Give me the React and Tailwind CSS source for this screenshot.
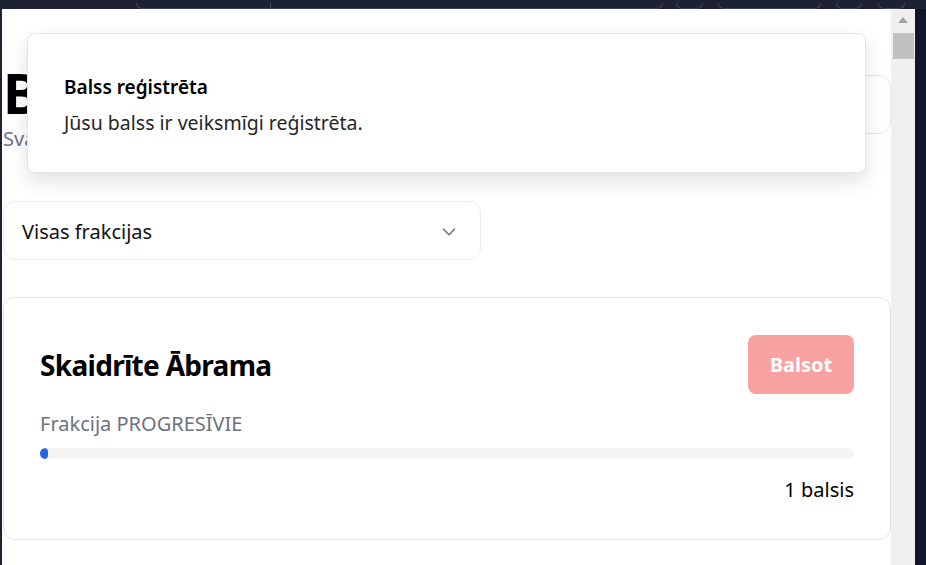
import React from "react";

function ChevronDown() {
  return (
    <svg width="22" height="22" viewBox="0 0 24 24" fill="none" stroke="#737373" strokeWidth="1.8" strokeLinecap="round" strokeLinejoin="round">
      <path d="M6 9l6 6 6-6" />
    </svg>
  );
}

export default function App() {
  const font = { fontFamily: '"Noto Sans", "Open Sans", Arial, sans-serif' };
  return (
    <div className="w-[926px] h-[565px] overflow-hidden bg-[#0f1729] flex flex-col" style={font}>
      {/* top browser strip */}
      <div className="h-[9px] bg-[#1c2232] flex items-end shrink-0">
        <div className="ml-[136px] w-[527px] h-[6px] border-b border-x border-[#3d4558] rounded-b-md flex">
          <div className="w-[134px] h-full border-r border-[#3d4558]" />
        </div>
        <div className="ml-[13px] w-[27px] h-[6px] border-b border-x border-[#3d4558] rounded-b-md" />
        <div className="ml-[15px] w-[103px] h-[6px] border-b border-x border-[#3d4558] rounded-b-md" />
        <div className="ml-[15px] w-[26px] h-[6px] border-b border-x border-[#3d4558] rounded-b-md" />
        <div className="ml-[16px] w-[27px] h-[6px] border-b border-x border-[#3d4558] rounded-b-md" />
      </div>
      <div className="flex flex-1 min-h-0">
        <div className="w-[2px] bg-[#1c2232] shrink-0" />
        {/* page */}
        <div className="relative w-[889px] bg-white overflow-hidden shrink-0">
          <div className="pl-[1px]">
            {/* header */}
            <div className="flex justify-between items-start pt-[52px]">
              <div>
                <h1 className="text-[55px] leading-[64px] font-bold text-black tracking-tight">Balsošana</h1>
                <p className="text-[20px] leading-[28px] text-[#6b7280]">Svarīgākie deputātu kandidāti</p>
              </div>
              <div className="mt-[14px] h-[59px] w-[200px] border border-[#e5e7eb] rounded-xl" />
            </div>
            {/* select */}
            <div className="mt-[48px] w-[478px] h-[59px] border border-[#ececec] rounded-xl flex items-center justify-between pl-[18px] pr-[20px] pt-[2px]">
              <span className="text-[20px] text-[#111]">Visas frakcijas</span>
              <ChevronDown />
            </div>
            {/* card */}
            <div className="mt-[37px] border border-[#e3e3e3] rounded-xl px-[36px] pt-[37px] pb-[35px]">
              <div className="flex items-center justify-between">
                <h2 className="text-[28px] font-bold text-black tracking-tight">Skaidrīte Ābrama</h2>
                <button className="h-[59px] w-[106px] rounded-lg bg-[#f7a1a1] text-white font-bold text-[20px]">Balsot</button>
              </div>
              <p className="mt-[16px] text-[20px] leading-[28px] text-[#6b7280]">Frakcija PROGRESĪVIE</p>
              <div className="mt-[10px] h-[11px] rounded-full bg-[#f4f4f2] overflow-hidden">
                <div className="h-full w-[8px] rounded-full bg-[#2563eb]" />
              </div>
              <p className="mt-[17px] text-[20px] leading-[28px] text-black text-right">1 balsis</p>
            </div>
          </div>
          {/* toast */}
          <div className="absolute left-[25px] top-[24px] w-[839px] h-[140px] bg-white border border-[#e5e5e5] rounded-lg shadow-[0_8px_20px_rgba(0,0,0,0.12)] pl-[36px] pt-[40px]">
            <div className="text-[19px] leading-[26px] font-semibold text-black">Balss reģistrēta</div>
            <div className="mt-[10px] text-[19.5px] leading-[26px] text-[#262626]">Jūsu balss ir veiksmīgi reģistrēta.</div>
          </div>
        </div>
        {/* scrollbar */}
        <div className="w-[24px] bg-[#f0f0f0] shrink-0 flex flex-col items-center">
          <div className="mt-[8px] w-0 h-0 border-l-[5px] border-r-[5px] border-b-[6px] border-l-transparent border-r-transparent border-b-[#a3a3a3]" />
          <div className="mt-[10px] w-[21px] h-[26px] bg-[#c1c1c1]" />
        </div>
        <div className="flex-1 bg-[#0f1729]" />
      </div>
    </div>
  );
}
